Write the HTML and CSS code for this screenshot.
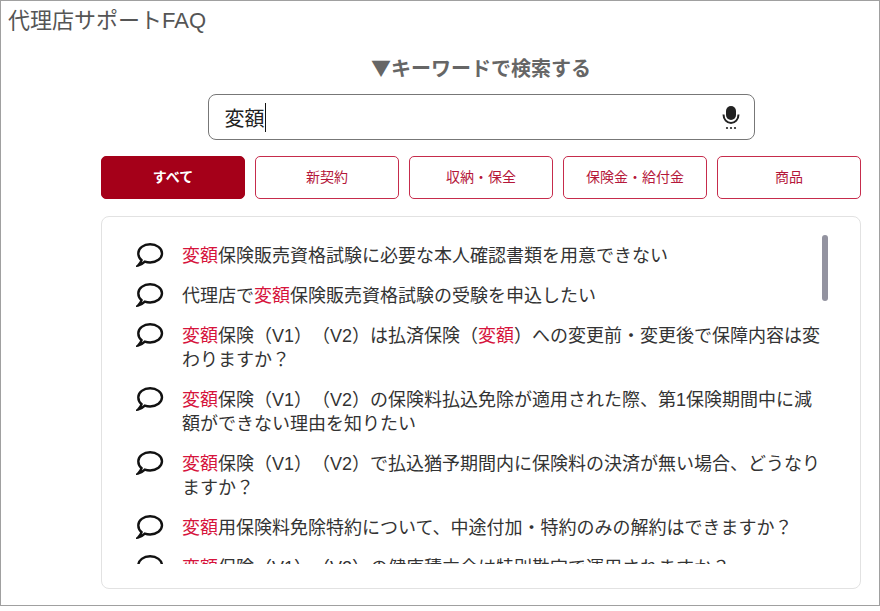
FILE: index.html
```html
<!DOCTYPE html>
<html lang="ja">
<head>
  <meta charset="UTF-8">
  <meta name="viewport" content="width=device-width, initial-scale=1.0">
  <title>代理店サポートFAQ</title>
  <link rel="stylesheet" href="styles.css">
</head>
<body>
  <div class="frame">
    <h1 class="page-title">代理店サポートFAQ</h1>

    <div class="main">
      <h2 class="search-title">▼キーワードで検索する</h2>

      <div class="search-box">
        <span class="search-text">変額</span><span class="caret"></span>
        <svg class="mic" viewBox="0 0 18 26">
          <rect x="4" y="2" width="10" height="14" rx="5" fill="#222"/>
          <path d="M1.5 10.5C1.5 15.5 5 19 9 19S16.5 15.5 16.5 10.5" fill="none" stroke="#222" stroke-width="2"/>
          <circle cx="5" cy="24" r="1.1" fill="#222"/>
          <circle cx="9" cy="24" r="1.1" fill="#222"/>
          <circle cx="13" cy="24" r="1.1" fill="#222"/>
        </svg>
      </div>

      <div class="tabs">
        <button class="tab active">すべて</button>
        <button class="tab">新契約</button>
        <button class="tab">収納・保全</button>
        <button class="tab">保険金・給付金</button>
        <button class="tab">商品</button>
      </div>

      <div class="card">
        <div class="thumb"></div>
        <ul class="faq-list">
          <li class="faq-item">
            <svg class="bubble" viewBox="0 0 28 24"><path d="M5.6 17.2C3.5 15.5 2.3 13 2.3 10.3C2.3 5.2 7.6 1.2 14.1 1.2S26 5.2 26 10.3S20.7 19.5 14.1 19.5C12.2 19.5 10.4 19.2 8.8 18.6C6.8 20.6 4.8 22 2 22.5C3.8 20.8 5 19.2 5.6 17.2Z"/></svg>
            <p><em>変額</em>保険販売資格試験に必要な本人確認書類を用意できない</p>
          </li>
          <li class="faq-item">
            <svg class="bubble" viewBox="0 0 28 24"><path d="M5.6 17.2C3.5 15.5 2.3 13 2.3 10.3C2.3 5.2 7.6 1.2 14.1 1.2S26 5.2 26 10.3S20.7 19.5 14.1 19.5C12.2 19.5 10.4 19.2 8.8 18.6C6.8 20.6 4.8 22 2 22.5C3.8 20.8 5 19.2 5.6 17.2Z"/></svg>
            <p>代理店で<em>変額</em>保険販売資格試験の受験を申込したい</p>
          </li>
          <li class="faq-item">
            <svg class="bubble" viewBox="0 0 28 24"><path d="M5.6 17.2C3.5 15.5 2.3 13 2.3 10.3C2.3 5.2 7.6 1.2 14.1 1.2S26 5.2 26 10.3S20.7 19.5 14.1 19.5C12.2 19.5 10.4 19.2 8.8 18.6C6.8 20.6 4.8 22 2 22.5C3.8 20.8 5 19.2 5.6 17.2Z"/></svg>
            <p><em>変額</em>保険（V1）（V2）は払済保険（<em>変額</em>）への変更前・変更後で保障内容は変わりますか？</p>
          </li>
          <li class="faq-item">
            <svg class="bubble" viewBox="0 0 28 24"><path d="M5.6 17.2C3.5 15.5 2.3 13 2.3 10.3C2.3 5.2 7.6 1.2 14.1 1.2S26 5.2 26 10.3S20.7 19.5 14.1 19.5C12.2 19.5 10.4 19.2 8.8 18.6C6.8 20.6 4.8 22 2 22.5C3.8 20.8 5 19.2 5.6 17.2Z"/></svg>
            <p><em>変額</em>保険（V1）（V2）の保険料払込免除が適用された際、第1保険期間中に減額ができない理由を知りたい</p>
          </li>
          <li class="faq-item">
            <svg class="bubble" viewBox="0 0 28 24"><path d="M5.6 17.2C3.5 15.5 2.3 13 2.3 10.3C2.3 5.2 7.6 1.2 14.1 1.2S26 5.2 26 10.3S20.7 19.5 14.1 19.5C12.2 19.5 10.4 19.2 8.8 18.6C6.8 20.6 4.8 22 2 22.5C3.8 20.8 5 19.2 5.6 17.2Z"/></svg>
            <p><em>変額</em>保険（V1）（V2）で払込猶予期間内に保険料の決済が無い場合、どうなりますか？</p>
          </li>
          <li class="faq-item">
            <svg class="bubble" viewBox="0 0 28 24"><path d="M5.6 17.2C3.5 15.5 2.3 13 2.3 10.3C2.3 5.2 7.6 1.2 14.1 1.2S26 5.2 26 10.3S20.7 19.5 14.1 19.5C12.2 19.5 10.4 19.2 8.8 18.6C6.8 20.6 4.8 22 2 22.5C3.8 20.8 5 19.2 5.6 17.2Z"/></svg>
            <p><em>変額</em>用保険料免除特約について、中途付加・特約のみの解約はできますか？</p>
          </li>
          <li class="faq-item">
            <svg class="bubble" viewBox="0 0 28 24"><path d="M5.6 17.2C3.5 15.5 2.3 13 2.3 10.3C2.3 5.2 7.6 1.2 14.1 1.2S26 5.2 26 10.3S20.7 19.5 14.1 19.5C12.2 19.5 10.4 19.2 8.8 18.6C6.8 20.6 4.8 22 2 22.5C3.8 20.8 5 19.2 5.6 17.2Z"/></svg>
            <p><em>変額</em>保険（V1）（V2）の健康積立金は特別勘定で運用されますか？</p>
          </li>
        </ul>
      </div>
    </div>
  </div>
</body>
</html>
```

FILE: styles.css
```css
body {
  margin: 0;
  background-color: #fff;
  color: #333;
  font-family: "Liberation Sans", "Noto Sans CJK JP", sans-serif;
  text-spacing-trim: space-all;
}
.frame {
  box-sizing: border-box;
  width: 880px;
  height: 606px;
  border: 1px solid #a0a0a0;
  overflow: hidden;
}
.page-title {
  margin: 0;
  padding: 5px 0 0 7px;
  font-size: 22px;
  font-weight: 400;
  line-height: 30px;
  color: #555;
}
.main {
  width: 760px;
  margin-left: 100px;
}
.search-title {
  margin: 17px 0 0;
  font-family: "Noto Sans CJK JP", sans-serif;
  font-size: 20px;
  font-weight: 700;
  line-height: 30px;
  color: #666;
  text-align: center;
}
.search-box {
  box-sizing: border-box;
  display: flex;
  align-items: center;
  width: 547px;
  height: 46px;
  margin: 11px auto 0;
  padding: 0 14px 0 16px;
  border: 1px solid #777;
  border-radius: 8px;
}
.search-text {
  margin-top: 4px;
  font-size: 20px;
  line-height: 30px;
  color: #222;
}
.caret {
  width: 1px;
  height: 29px;
  background-color: #111;
}
.mic {
  width: 18px;
  height: 26px;
  margin-left: auto;
}
.tabs {
  display: flex;
  gap: 10px;
  margin-top: 16px;
}
.tab {
  width: 144px;
  height: 43px;
  padding: 0 0 4px;
  background-color: #fff;
  border: 1px solid #c62c4c;
  border-radius: 5px;
  color: #b5173a;
  font-family: inherit;
  font-size: 14px;
  cursor: pointer;
}
.tab.active {
  background-color: #a50019;
  border-color: #a50019;
  color: #fff;
  font-weight: 700;
}
.card {
  position: relative;
  box-sizing: border-box;
  height: 373px;
  margin-top: 17px;
  padding-top: 19px;
  border: 1px solid #e2e2e2;
  border-radius: 8px;
}
.thumb {
  position: absolute;
  top: 18px;
  right: 32px;
  width: 6px;
  height: 66px;
  background-color: #9393a0;
  border-radius: 3px;
}
.faq-list {
  height: 328px;
  margin: 0;
  padding: 0 0 0 34px;
  list-style: none;
  overflow: hidden;
}
.faq-item {
  display: flex;
  align-items: flex-start;
  gap: 18px;
  width: 689px;
  margin-top: 8px;
  padding-bottom: 8px;
}
.bubble {
  flex: none;
  width: 28px;
  height: 24px;
  margin-top: -1px;
  fill: none;
  stroke: #111;
  stroke-width: 2.4;
}
.faq-item p {
  margin: 0;
  font-size: 18px;
  line-height: 24px;
}
.faq-item em {
  color: #d6143c;
  font-style: normal;
}
```
